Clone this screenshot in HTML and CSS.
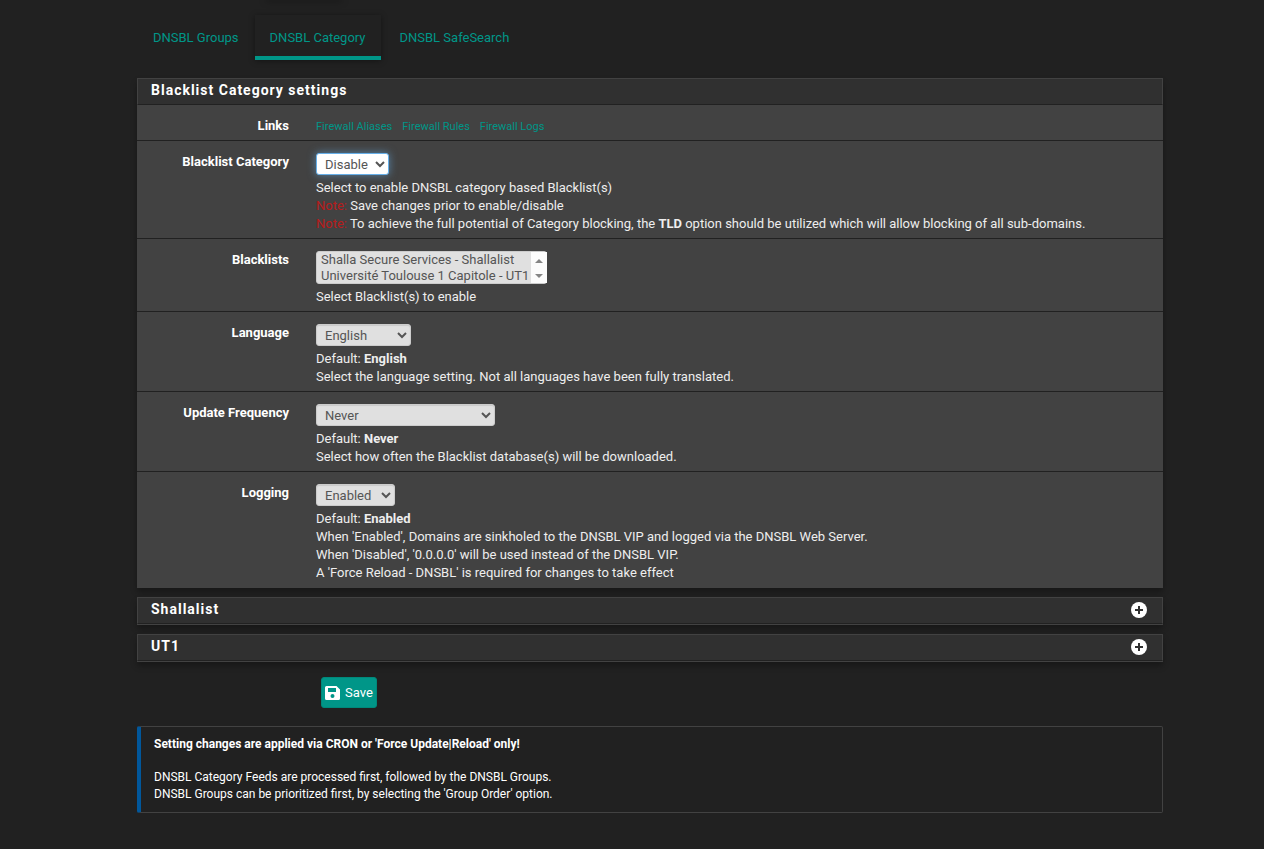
FILE: index.html
```
<!DOCTYPE html>
<html lang="en">
<head>
<meta charset="utf-8">
<title>DNSBL Category</title>
<link rel="stylesheet" href="styles.css">
</head>
<body>
<div class="nav-shadow"></div>
<main class="container">
  <nav class="tabs">
    <a class="tab" href="#groups">DNSBL Groups</a>
    <a class="tab tab-active" href="#category">DNSBL Category</a>
    <a class="tab" href="#safesearch">DNSBL SafeSearch</a>
  </nav>

  <form>
    <section class="panel">
      <h2 class="panel-heading">Blacklist Category settings</h2>
      <div class="row row-links">
        <span class="label">Links</span>
        <div class="links">
          <a href="#aliases">Firewall Aliases</a>
          <a href="#rules">Firewall Rules</a>
          <a href="#logs">Firewall Logs</a>
        </div>
      </div>
      <div class="row">
        <label class="label" for="category">Blacklist Category</label>
        <div>
          <select class="control control-focus w-category" id="category"><option>Disable</option><option>Enable</option></select>
          <p class="help">Select to enable DNSBL category based Blacklist(s)<br>
          <span class="note">Note:</span> Save changes prior to enable/disable<br>
          <span class="note">Note:</span> To achieve the full potential of Category blocking, the <b>TLD</b> option should be utilized which will allow blocking of all sub-domains.</p>
        </div>
      </div>
      <div class="row">
        <label class="label" for="blacklists">Blacklists</label>
        <div>
          <div class="listbox">
            <select class="list" id="blacklists" multiple size="2"><option>Shalla Secure Services - Shallalist</option><option>Université Toulouse 1 Capitole - UT1</option></select>
            <svg class="list-scroll" viewBox="0 0 16 31" width="16" height="31" aria-hidden="true"><rect width="16" height="31" fill="#fcfcfc"/><path d="M4 11l4-4 4 4zM4 22l4 4 4-4z" fill="#858585"/></svg>
          </div>
          <p class="help">Select Blacklist(s) to enable</p>
        </div>
      </div>
      <div class="row">
        <label class="label" for="language">Language</label>
        <div>
          <select class="control w-language" id="language"><option>English</option></select>
          <p class="help">Default: <b>English</b><br>
          Select the language setting. Not all languages have been fully translated.</p>
        </div>
      </div>
      <div class="row">
        <label class="label" for="frequency">Update Frequency</label>
        <div>
          <select class="control w-frequency" id="frequency"><option>Never</option></select>
          <p class="help">Default: <b>Never</b><br>
          Select how often the Blacklist database(s) will be downloaded.</p>
        </div>
      </div>
      <div class="row row-last">
        <label class="label" for="logging">Logging</label>
        <div>
          <select class="control w-logging" id="logging"><option>Enabled</option></select>
          <p class="help">Default: <b>Enabled</b><br>
          When 'Enabled', Domains are sinkholed to the DNSBL VIP and logged via the DNSBL Web Server.<br>
          When 'Disabled', '0.0.0.0' will be used instead of the DNSBL VIP.<br>
          A 'Force Reload - DNSBL' is required for changes to take effect</p>
        </div>
      </div>
    </section>

    <section class="panel panel-closed">
      <h2 class="panel-heading">Shallalist
        <button class="toggle" type="button" aria-label="Expand Shallalist"><svg viewBox="0 0 16 16" width="16" height="16"><circle cx="8" cy="8" r="8" fill="#fff"/><path d="M8 4v8M4 8h8" stroke="#303030" stroke-width="2"/></svg></button>
      </h2>
    </section>
    <section class="panel panel-closed">
      <h2 class="panel-heading">UT1
        <button class="toggle" type="button" aria-label="Expand UT1"><svg viewBox="0 0 16 16" width="16" height="16"><circle cx="8" cy="8" r="8" fill="#fff"/><path d="M8 4v8M4 8h8" stroke="#303030" stroke-width="2"/></svg></button>
      </h2>
    </section>

    <button class="save" type="submit">
      <svg viewBox="0 0 15 14" width="15" height="14" aria-hidden="true"><path fill="#fff" fill-rule="evenodd" d="M1.500 0H11.500L15 3.500V12.500Q15 14 13.500 14H1.500Q0 14 0 12.500V1.500Q0 0 1.500 0zM3 2V6H11V2zM7.500 8A2 2 0 1 0 7.500 12A2 2 0 1 0 7.500 8z"/></svg>
      Save
    </button>
  </form>

  <aside class="alert">
    <p><b>Setting changes are applied via CRON or 'Force Update|Reload' only!</b></p>
    <p>DNSBL Category Feeds are processed first, followed by the DNSBL Groups.<br>
    DNSBL Groups can be prioritized first, by selecting the 'Group Order' option.</p>
  </aside>
</main>
</body>
</html>
```
FILE: styles.css
```
* { box-sizing: border-box; }

body {
  margin: 0;
  background: #212121;
  color: #eee;
  font: 13px/18px Roboto, sans-serif;
}

p { margin: 0; }
a { color: #009688; text-decoration: none; }
b { font-weight: 700; }

.nav-shadow {
  width: 74px;
  height: 0;
  margin-left: 267px;
  box-shadow: 0 0 6px 1px rgba(0, 0, 0, 0.5);
}

.container { padding: 15px 101px 24px 137px; }

.tabs { display: flex; }
.tab {
  padding: 16px 16px 11px;
  border-bottom: 4px solid transparent;
  line-height: 14px;
}
.tab-active {
  padding-left: 15px;
  padding-right: 15px;
  border-color: #009688;
  box-shadow: 0 1px 6px rgba(0, 0, 0, 0.4);
}
.tab:last-child { padding-left: 19px; }

.panel {
  margin-top: 18px;
  background: #424242;
  box-shadow: 0 4px 6px rgba(0, 0, 0, 0.3);
}
.panel-heading {
  display: flex;
  align-items: center;
  justify-content: space-between;
  height: 27px;
  margin: 0;
  padding: 0 15px 3px 13px;
  border: 1px solid #424242;
  border-bottom-color: #212121;
  background: #303030;
  color: #fff;
  font-size: 14px;
  font-weight: 700;
  letter-spacing: 1px;
}
.panel-closed {
  margin-top: 9px;
  padding-bottom: 1px;
}
.toggle {
  width: 16px;
  height: 16px;
  margin-top: 2px;
  padding: 0;
  border: 0;
  background: none;
}
.toggle svg { display: block; }

.row {
  display: grid;
  grid-template-columns: 152px 1fr;
  column-gap: 27px;
  padding: 12px 0 5px;
  border-top: 1px solid #212121;
}
.row-links { border-top: 0; }
.row-last { padding-bottom: 6px; }
.label {
  color: #fff;
  font-weight: 700;
  text-align: right;
}
.links {
  display: flex;
  align-items: end;
  gap: 10px;
  font-size: 11px;
  line-height: 16px;
}
.help { margin-top: 4px; }
.note { color: #b71c1c; }

.control {
  display: block;
  height: 22px;
  padding: 0 4px;
  border: 1px solid #ccc;
  border-radius: 3px;
  background-color: #e0e0e0;
  box-shadow: inset 0 1px 1px rgba(0, 0, 0, 0.1);
  color: #555;
  font: 13px Roboto, sans-serif;
}
.control-focus {
  border-color: #66afe9;
  background-color: #fff;
  box-shadow: 0 0 8px rgba(102, 175, 233, 0.6);
}
.w-category { width: 73px; }
.w-language { width: 95px; }
.w-frequency { width: 179px; }
.w-logging { width: 79px; }

.listbox {
  position: relative;
  width: 231px;
  height: 33px;
}
.list {
  display: block;
  width: 100%;
  height: 33px;
  padding: 0 0 0 2px;
  border: 1px solid #ccc;
  border-radius: 3px;
  background: #e0e0e0;
  color: #555;
  font: 13px Roboto, sans-serif;
  overflow: hidden;
}
.list option {
  min-height: 16px;
  padding: 0 2px;
  line-height: 16px;
}
.list-scroll {
  position: absolute;
  top: 1px;
  right: 0;
}

.save {
  display: flex;
  align-items: center;
  gap: 5px;
  margin: 15px 0 18px 184px;
  padding: 5px 3px;
  border: 1px solid #00897b;
  border-radius: 3px;
  background: #009688;
  color: #fff;
  font: 13px/19px Roboto, sans-serif;
}

.alert {
  display: grid;
  gap: 16px;
  padding: 9px 13px;
  border: 1px solid #424242;
  border-left: 4px solid #01579b;
  border-radius: 2px;
  color: #fff;
  font-size: 12px;
  line-height: 17px;
}
```
